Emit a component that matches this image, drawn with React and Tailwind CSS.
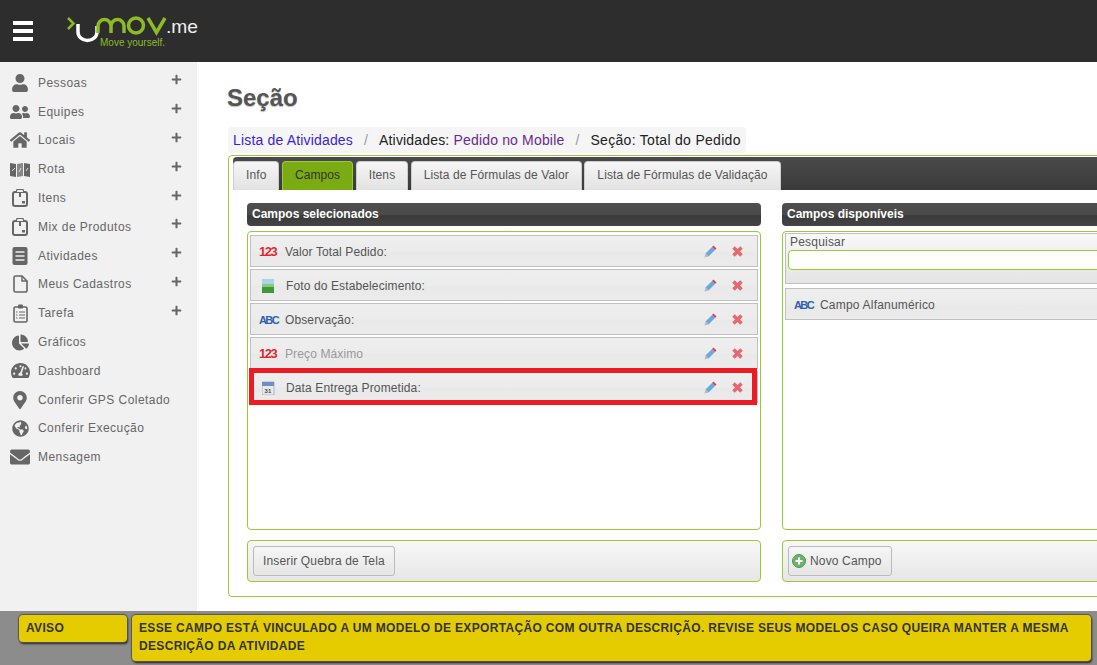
import React from "react";
import { FaUser, FaUserFriends, FaHome, FaPlus, FaChartPie, FaTachometerAlt, FaMapMarkerAlt, FaGlobeAmericas, FaEnvelope } from "react-icons/fa";

const BoxIcon = () => (
  <svg width="18" height="20" viewBox="0 0 18 20" fill="none">
    <rect x="2" y="4" width="14" height="14" rx="2" stroke="#666" strokeWidth="2" />
    <path d="M6 1.5h6l1 3H5z" fill="#f1f1f1" stroke="#666" strokeWidth="1.2" />
    <path d="M9 4v5" stroke="#666" strokeWidth="2" />
    <rect x="11" y="13" width="3" height="2.5" fill="#666" />
  </svg>
);

const MapIcon = () => (
  <svg width="20" height="15" viewBox="0 0 20 15">
    <path d="M0 1l6 1v13l-6-1z" fill="#666" />
    <path d="M7 2l6-1v13l-6 1z" fill="#888" />
    <path d="M14 1l6 1v13l-6-1z" fill="#666" />
    <path d="M2 9l3-3M9 10l2-4M16 9l2-3" stroke="#ddd" strokeWidth="1" />
  </svg>
);

const ListIcon = () => (
  <svg width="16" height="18" viewBox="0 0 16 18">
    <rect width="15" height="18" x="0.5" rx="2" fill="#666" />
    <path d="M3.5 5h9M3.5 9h9M3.5 13h9" stroke="#eee" strokeWidth="1.6" />
  </svg>
);

const DocIcon = () => (
  <svg width="15" height="18" viewBox="0 0 15 18" fill="none">
    <path d="M1 2.5a1.5 1.5 0 0 1 1.5-1.5H9l5 5v9.500a1.500 1.500 0 0 1-1.500 1.500h-10A1.500 1.500 0 0 1 1 15.500z" stroke="#666" strokeWidth="1.6" />
    <path d="M9 1v5h5" stroke="#666" strokeWidth="1.4" />
  </svg>
);

const ClipIcon = () => (
  <svg width="15" height="19" viewBox="0 0 15 19" fill="none">
    <rect x="1" y="3" width="13" height="15" rx="1.500" stroke="#666" strokeWidth="1.600" />
    <rect x="5" y="0.500" width="5" height="4" rx="1" fill="#666" />
    <path d="M6 8h6M6 11h6M6 14h6M3 8h1.500M3 11h1.500M3 14h1.500" stroke="#666" strokeWidth="1.200" />
  </svg>
);

const menu = [
  { label: "Pessoas", icon: <FaUser size={18} color="#666" />, plus: true },
  { label: "Equipes", icon: <FaUserFriends size={20} color="#666" />, plus: true },
  { label: "Locais", icon: <FaHome size={20} color="#666" />, plus: true },
  { label: "Rota", icon: <MapIcon />, plus: true },
  { label: "Itens", icon: <BoxIcon />, plus: true },
  { label: "Mix de Produtos", icon: <BoxIcon />, plus: true },
  { label: "Atividades", icon: <ListIcon />, plus: true },
  { label: "Meus Cadastros", icon: <DocIcon />, plus: true },
  { label: "Tarefa", icon: <ClipIcon />, plus: true },
  { label: "Gráficos", icon: <FaChartPie size={17} color="#666" /> },
  { label: "Dashboard", icon: <FaTachometerAlt size={19} color="#666" /> },
  { label: "Conferir GPS Coletado", icon: <FaMapMarkerAlt size={18} color="#666" /> },
  { label: "Conferir Execução", icon: <FaGlobeAmericas size={17} color="#666" /> },
  { label: "Mensagem", icon: <FaEnvelope size={20} color="#666" /> },
];

const Num = () => (
  <span className="w-[22px] text-[13px] font-bold tracking-[-1.5px] text-[#e3242f] [text-shadow:0_0_1px_#fff]">123</span>
);

const Abc = () => (
  <span className="w-[22px] text-[11px] font-bold tracking-[-1.6px] text-[#2f62ad]">ABC</span>
);

const ImageIcon = () => (
  <svg width="13" height="14" viewBox="0 0 13 14" className="ml-[3px] mr-[7px]">
    <rect width="12" height="14" fill="#a9d4ea" />
    <rect y="6" width="12" height="8" fill="#3c9a3a" />
    <rect y="5" width="12" height="3" fill="#8cc878" />
  </svg>
);

const CalendarIcon = () => (
  <svg width="13" height="14" viewBox="0 0 13 14" className="ml-[3px] mr-[7px]">
    <rect y="1" width="12" height="13" fill="#e8e8ee" stroke="#8a8fa0" strokeWidth="0.600" />
    <rect y="1" width="12" height="4" fill="#6f8fc0" />
    <text x="6" y="12" textAnchor="middle" fontSize="6" fontWeight="700" fill="#444" fontFamily="Liberation Sans">31</text>
  </svg>
);

const Pencil = () => (
  <svg width="13" height="13" viewBox="0 0 13 13">
    <path d="M0.500 12.500l1-4 3 3z" fill="#bbb" />
    <path d="M1.500 8.500l6.500-6.500 3 3-6.500 6.500z" fill="#6aa8e0" />
    <path d="M8 2l1.500-1.500 3 3-1.500 1.500z" fill="#d9454f" />
  </svg>
);

const Cross = () => (
  <svg width="11" height="11" viewBox="0 0 11 11">
    <path d="M1.500 1.500l8 8M9.500 1.500l-8 8" stroke="#e8666e" strokeWidth="3.500" />
  </svg>
);

const PlusCircle = () => (
  <svg width="14" height="14" viewBox="0 0 14 14" className="mr-[4px]">
    <circle cx="7" cy="7" r="6.500" fill="#6cb46c" stroke="#4e9a4e" />
    <path d="M7 3.500v7M3.500 7h7" stroke="#fff" strokeWidth="2" />
  </svg>
);

const Logo = () => (
  <svg width="136" height="36" viewBox="66 14 136 36" className="ml-[33px] mt-[2px]">
    <path d="M68 18l5.500 5.500-5.500 5.500" fill="none" stroke="#8dbb25" strokeWidth="2.500" />
    <path d="M78 24v8a9.500 8.500 0 0 0 19 0v-6" fill="none" stroke="#fff" strokeWidth="3.500" />
    <path d="M98 33V26a6.500 6.500 0 0 1 13 0v7M111 26a6.500 6.500 0 0 1 13 0v7" fill="none" stroke="#8dbb25" strokeWidth="3.500" />
    <circle cx="136" cy="25.500" r="7.500" fill="none" stroke="#8dbb25" strokeWidth="3.500" />
    <path d="M148 18l8.500 14.500L165 18" fill="none" stroke="#8dbb25" strokeWidth="3.500" />
    <text x="166" y="33" fontFamily="Liberation Sans" fontSize="19" fill="#eee" textLength="32" lengthAdjust="spacingAndGlyphs">.me</text>
    <text x="100" y="46" fontFamily="Liberation Sans" fontSize="10" fill="#8dbb25">Move yourself.</text>
  </svg>
);

const rowBg = "bg-[linear-gradient(#eeeeee,#ececec_50%,#e9e9e9_55%,#ebebeb)]";

const fields = [
  { icon: <Num />, label: "Valor Total Pedido:" },
  { icon: <ImageIcon />, label: "Foto do Estabelecimento:" },
  { icon: <Abc />, label: "Observação:" },
  { icon: <Num />, label: "Preço Máximo", muted: true },
  { icon: <CalendarIcon />, label: "Data Entrega Prometida:", marked: true },
];

const tabs = ["Info", "Campos", "Itens", "Lista de Fórmulas de Valor", "Lista de Fórmulas de Validação"];

const PanelTitle = ({ children }) => (
  <div className="flex h-[23px] items-center rounded-[4px] bg-[linear-gradient(#4e4e4e,#4a4a4a_50%,#3a3a3a_55%,#444)] px-[5px] pb-[2px] text-[12px] font-bold text-white">
    {children}
  </div>
);

const App = () => {
  return (
    <div className="flex h-[665px] w-[1097px] flex-col overflow-hidden bg-white font-['Liberation_Sans',Arial,sans-serif]">
      <header className="flex h-[62px] shrink-0 items-center bg-[#2d2d2d] pl-[13px]">
        <div className="flex w-[20px] flex-col gap-[4px]">
          <span className="h-[4px] bg-white" />
          <span className="h-[4px] bg-white" />
          <span className="h-[4px] bg-white" />
        </div>
        <Logo />
      </header>

      <div className="flex min-h-0 flex-1">
        <aside className="w-[197px] shrink-0 bg-[#f1f1f1] pt-[6.5px]">
          {menu.map((item) => (
            <div key={item.label} className="flex h-[28.8px] items-center text-[12px] tracking-[0.45px] text-[#666]">
              <span className="flex w-[38px] shrink-0 justify-center pl-[4px] pr-[2px]">{item.icon}</span>
              <span className="flex-1">{item.label}</span>
              {item.plus && (
                <span className="mr-[15px] mt-[-6px]">
                  <FaPlus size={11} color="#666" />
                </span>
              )}
            </div>
          ))}
        </aside>

        <main className="min-w-0 flex-1 pl-[31px]">
          <h1 className="-ml-px flex h-[65px] items-center pt-[7px] text-[24px] font-bold text-[#555] [text-shadow:0_1px_1px_#bbb]">Seção</h1>
          <div className="flex h-[26px] w-[518px] items-center rounded-[4px] bg-[#f5f5f5] pl-[5px] text-[14px] tracking-[0.17px] text-[#333]">
            <span className="text-[#3a1fd0]">Lista de Atividades</span>
            <span className="mx-[11px] text-[#999]">/</span>
            <span className="text-[#222]">Atividades:&nbsp;</span>
            <span className="text-[#6a2a8c]">Pedido no Mobile</span>
            <span className="mx-[11px] text-[#999]">/</span>
            <span className="tracking-[0.3px] text-[#222]">Seção: Total do Pedido</span>
          </div>

          <div className="mt-[2px] h-[442px] w-[960px] rounded-[4px] border border-[#99cc33] pl-[4px] pt-[1px]">
            <div className="flex h-[33px] items-end gap-[2.5px] rounded-[4px] bg-[linear-gradient(#4a4a4a,#3a3a3a)] pt-[4px]">
              {tabs.map((tab) => (
                <div
                  key={tab}
                  className={
                    tab === "Campos"
                      ? "flex h-[29px] items-center rounded-t-[4px] border border-b-0 border-[#99cc33] bg-[#7aab13] px-[12px] pb-[3px] text-[12px] tracking-[0.1px] text-[#333]"
                      : "flex h-[29px] items-center rounded-t-[4px] border border-b-0 border-[#ccc] bg-[linear-gradient(#f6f6f6,#e2e2e2)] px-[12px] pb-[3px] text-[12px] tracking-[0.1px] text-[#555]"
                  }
                >
                  {tab}
                </div>
              ))}
            </div>

            <div className="flex gap-[21px] pl-[14px] pt-[13px]">
              <section className="w-[514px] shrink-0">
                <PanelTitle>Campos selecionados</PanelTitle>
                <div className="mt-[5px] flex h-[299px] flex-col gap-[2px] rounded-[4px] border border-[#99cc33] px-[2px] pt-[3px]">
                  {fields.map((f) => (
                    <div key={f.label} className={`relative flex h-[32px] shrink-0 items-center border border-[#c0c0c0] pl-[8px] pt-[2px] text-[12px] tracking-[0.12px] ${rowBg}`}>
                      <span className="flex items-center">{f.icon}</span>
                      <span className={f.muted ? "ml-[4px] text-[#999]" : "ml-[4px] text-[#555]"}>{f.label}</span>
                      <span className="-mt-[2px] ml-auto mr-[14px] flex items-center gap-[15px]">
                        <Pencil />
                        <Cross />
                      </span>
                      {f.marked && <span className="absolute -bottom-[3px] -left-[2px] right-0 -top-[4px] border-[5px] border-[#ed1c24]" />}
                    </div>
                  ))}
                </div>
                <div className="mt-[10px] flex h-[42px] items-center rounded-[4px] border border-[#99cc33] bg-[linear-gradient(#f8f8f8,#e6e6e6)] pl-[5px]">
                  <button className="h-[30px] rounded-[3px] border border-[#bbb] bg-[linear-gradient(#f6f6f6,#e6e6e6)] px-[9px] text-[12px] tracking-[0.15px] text-[#555]">Inserir Quebra de Tela</button>
                </div>
              </section>

              <section className="w-[400px] shrink-0">
                <PanelTitle>Campos disponíveis</PanelTitle>
                <div className="mt-[5px] h-[299px] rounded-[4px] border border-[#99cc33] px-[2px] pt-[1px]">
                  <div className="h-[51px] border border-[#c0c0c0] bg-[linear-gradient(#f8f8f8,#e4e4e4)] pl-[2px]">
                    <div className="pl-[2px] text-[12px] leading-[16px] tracking-[0.2px] text-[#555]">Pesquisar</div>
                    <input className="block h-[20px] w-full rounded-[4px] border border-[#99cc33] bg-white" />
                  </div>
                  <div className={`mt-[4px] flex h-[32px] items-center border border-[#c0c0c0] pl-[8px] pt-[2px] text-[12px] tracking-[0.2px] text-[#555] ${rowBg}`}>
                    <Abc />
                    <span className="ml-[4px]">Campo Alfanumérico</span>
                  </div>
                </div>
                <div className="mt-[10px] flex h-[42px] items-center rounded-[4px] border border-[#99cc33] bg-[linear-gradient(#f8f8f8,#e6e6e6)] pl-[5px]">
                  <button className="flex h-[30px] items-center rounded-[3px] border border-[#bbb] bg-[linear-gradient(#f6f6f6,#e6e6e6)] pl-[3px] pr-[9px] text-[12px] tracking-[0.15px] text-[#555]">
                    <PlusCircle />
                    Novo Campo
                  </button>
                </div>
              </section>
            </div>
          </div>
        </main>
      </div>

      <footer className="flex h-[54px] shrink-0 items-start gap-[5px] bg-[#8c8c8c] pl-[19px] pt-[4px] text-[12px] font-bold leading-[18px] tracking-[0.33px] text-[#333]">
        <div className="h-[27px] w-[108px] rounded-[4px] bg-[#e5cc00] px-[7px] pt-[4px] shadow-[0_0_1px_1px_#555,1px_2px_2px_#222]">AVISO</div>
        <div className="h-[46px] w-[959px] rounded-[4px] bg-[#e5cc00] px-[7px] pt-[4px] shadow-[0_0_1px_1px_#555,1px_2px_2px_#222]">
          ESSE CAMPO ESTÁ VINCULADO A UM MODELO DE EXPORTAÇÃO COM OUTRA DESCRIÇÃO. REVISE SEUS MODELOS CASO QUEIRA MANTER A MESMA DESCRIÇÃO DA ATIVIDADE
        </div>
      </footer>
    </div>
  );
};

export default App;
